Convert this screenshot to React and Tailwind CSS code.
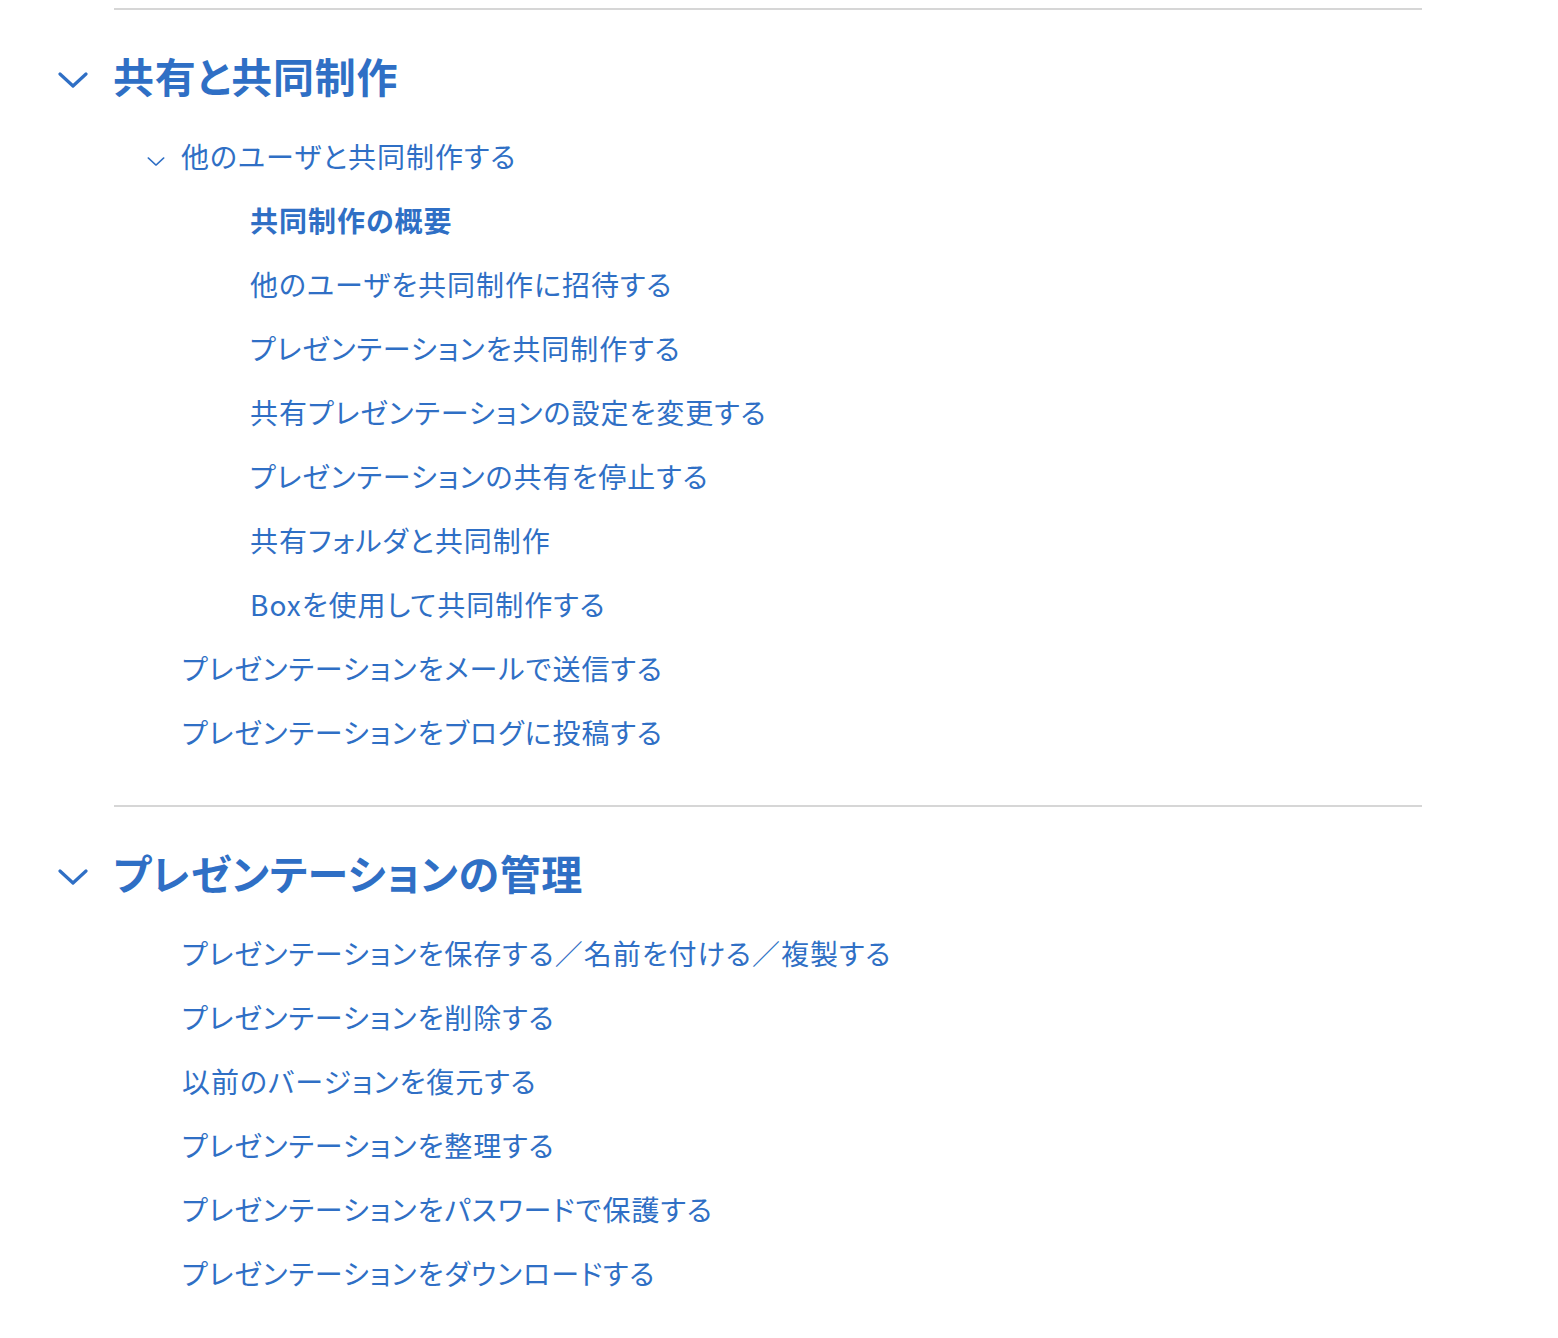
const sections = [
  {
    title: '共有と共同制作',
    items: [
      {
        label: '他のユーザと共同制作する',
        children: [
          { label: '共同制作の概要', active: true },
          { label: '他のユーザを共同制作に招待する' },
          { label: 'プレゼンテーションを共同制作する' },
          { label: '共有プレゼンテーションの設定を変更する' },
          { label: 'プレゼンテーションの共有を停止する' },
          { label: '共有フォルダと共同制作' },
          { label: 'Boxを使用して共同制作する' },
        ],
      },
      { label: 'プレゼンテーションをメールで送信する' },
      { label: 'プレゼンテーションをブログに投稿する' },
    ],
  },
  {
    title: 'プレゼンテーションの管理',
    items: [
      { label: 'プレゼンテーションを保存する／名前を付ける／複製する' },
      { label: 'プレゼンテーションを削除する' },
      { label: '以前のバージョンを復元する' },
      { label: 'プレゼンテーションを整理する' },
      { label: 'プレゼンテーションをパスワードで保護する' },
      { label: 'プレゼンテーションをダウンロードする' },
    ],
  },
];

const Chevron = ({ className, stroke }) => (
  <svg className={className} viewBox="0 0 30 16" fill="none">
    <path d="M2 2 L15 14 L28 2" stroke="#2f6fc5" strokeWidth={stroke} strokeLinecap="round" strokeLinejoin="round" />
  </svg>
);

const Row = ({ item, indent }) => (
  <div
    className={`flex items-center h-16 text-[28px] leading-none tracking-[1px] ${indent} ${item.active ? 'font-bold' : 'font-normal'}`}
  >
    {item.label}
  </div>
);

const App = () => {
  return (
    <div
      className="min-h-screen bg-white text-[#2f6fc5] pt-2 [font-feature-settings:'palt']"
      style={{ fontFamily: '"Noto Sans CJK JP", "Noto Sans", sans-serif' }}
    >
      {sections.map((section) => (
        <section key={section.title} className="pb-[41px]">
          <div className="ml-[114px] w-[1308px] h-[2px] bg-[#d6d6d6]" />
          <div className="flex items-center mt-[41px] h-12">
            <Chevron className="ml-[58px] w-[30px] h-[16px] mt-[10px]" stroke={3.2} />
            <h2 className="ml-[25px] text-[41px] font-bold leading-none tracking-[0.7px]">{section.title}</h2>
          </div>
          <div className="mt-[25px]">
            {section.items.map((item) =>
              item.children ? (
                <div key={item.label}>
                  <div className="flex items-center h-16 text-[28px] leading-none tracking-[1px]">
                    <Chevron className="ml-[147px] w-[18px] h-[11px] mt-[10px]" stroke={2.4} />
                    <span className="ml-[16px]">{item.label}</span>
                  </div>
                  {item.children.map((c) => (
                    <Row key={c.label} item={c} indent="pl-[250px]" />
                  ))}
                </div>
              ) : (
                <Row key={item.label} item={item} indent="pl-[182px]" />
              )
            )}
          </div>
        </section>
      ))}
    </div>
  );
};

export default App;
